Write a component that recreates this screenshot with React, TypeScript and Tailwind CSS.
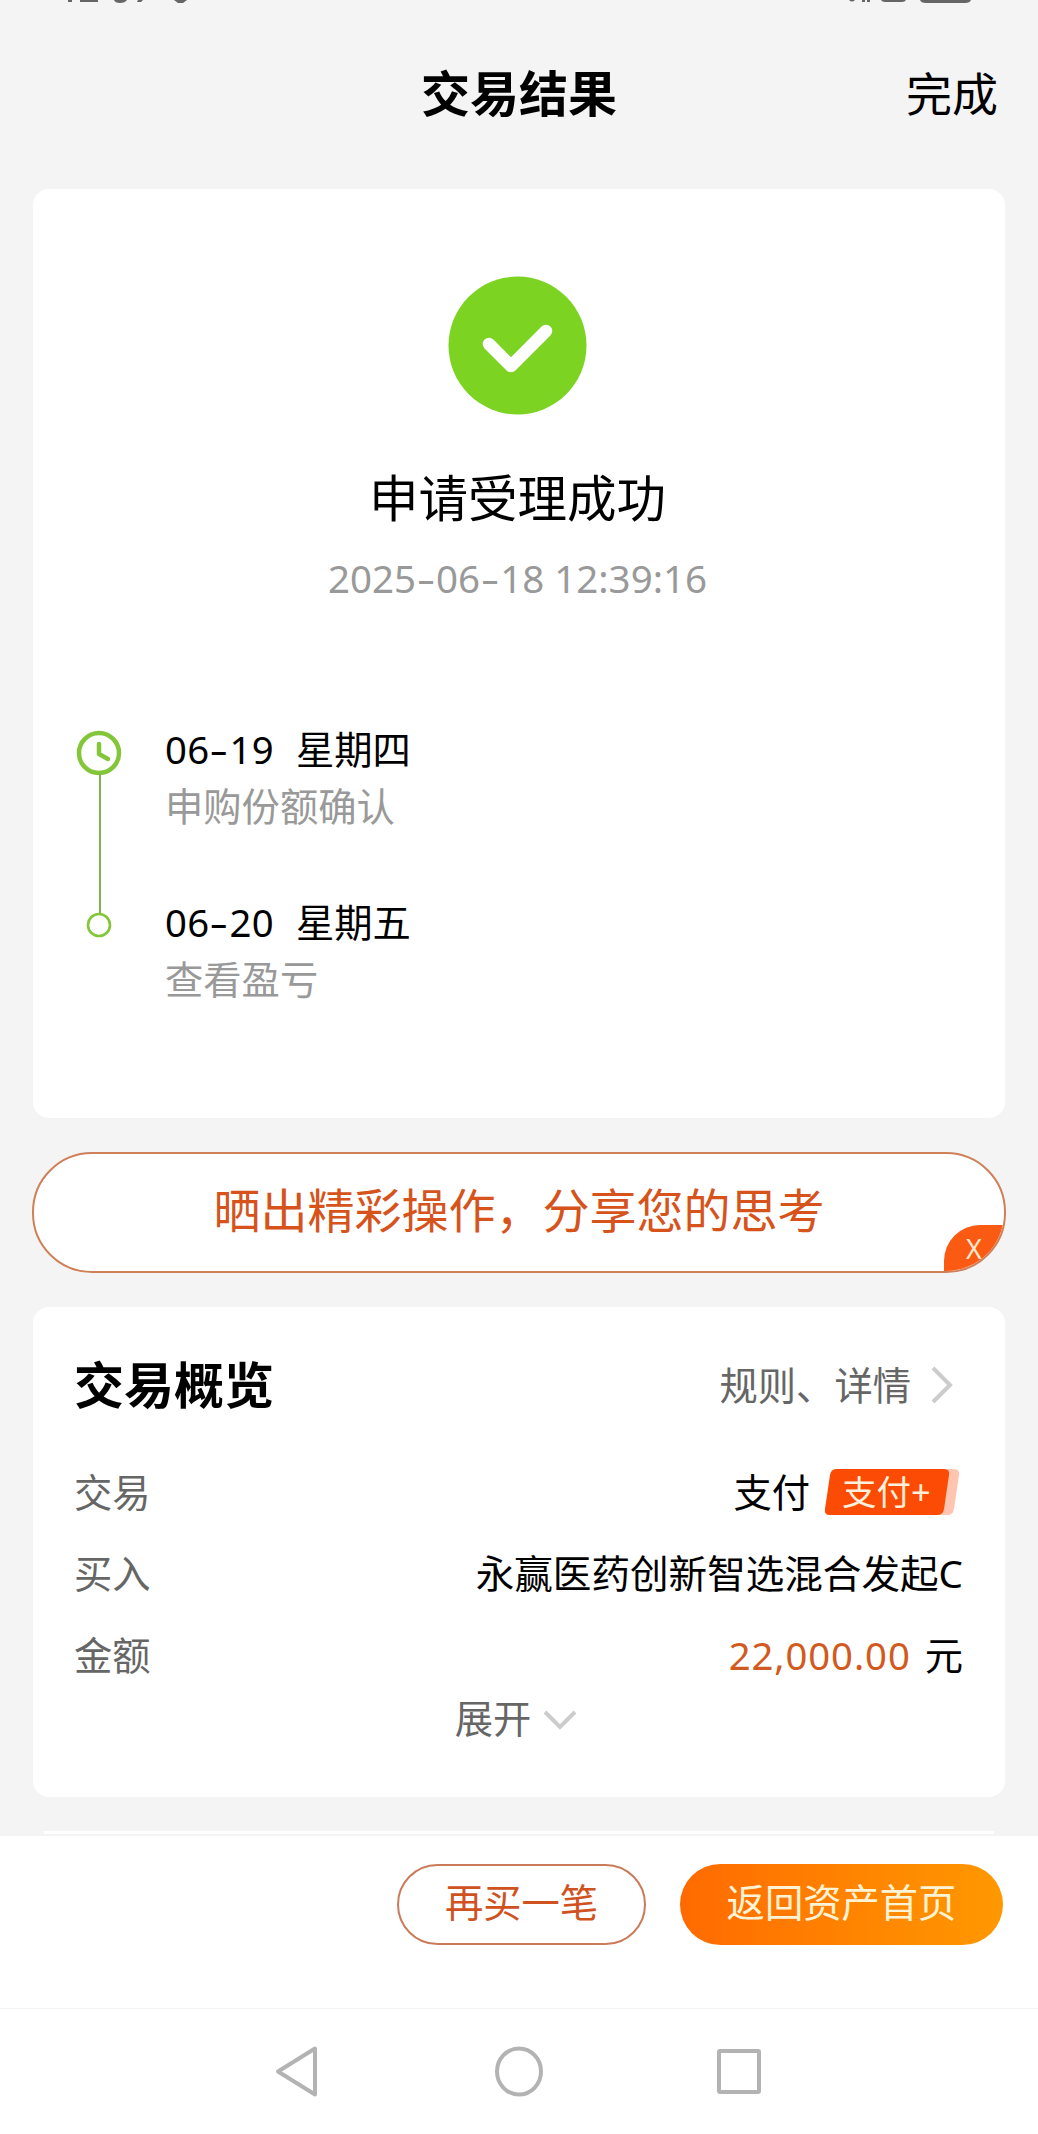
import type { ReactNode } from 'react';

type TimelineStep = {
  date: string;
  weekday: string;
  note: string;
};

const steps: TimelineStep[] = [
  { date: '06-19', weekday: '星期四', note: '申购份额确认' },
  { date: '06-20', weekday: '星期五', note: '查看盈亏' },
];

// 数字里的连字符比默认字形更宽
function Digits({ text }: { text: string }) {
  return (
    <>
      {text.split('').map((char, index) =>
        char === '-' ? (
          <span key={index} className="inline-block w-[20px] scale-x-150 text-center">
            -
          </span>
        ) : (
          <span key={index}>{char}</span>
        ),
      )}
    </>
  );
}

function StatusBar() {
  return (
    <svg className="block h-[6px] w-full" viewBox="0 0 1038 6" fill="#666">
      <path d="M68 0h4v2h-4ZM80 0h18v2h-18ZM114 0h13q-2 3-7 3t-6-3ZM138 0h5l-2 2h-4ZM174 0h13l-4 3h-5Z" />
      <path d="M849 0h6q-3 3-6 0ZM862 0h3v2h-3ZM867 0h3v2h-3ZM881 0h25q-1 2-4 2h-17q-3 0-4-2ZM920 0h51q-1 3-6 3h-39q-5 0-6-3Z" />
    </svg>
  );
}

function Row({ label, children }: { label: string; children: ReactNode }) {
  return (
    <div className="flex h-[81.5px] items-center justify-between">
      <span className="text-[#666]">{label}</span>
      <span className="flex items-center">{children}</span>
    </div>
  );
}

export default function App() {
  return (
    <div className="flex h-[2134px] w-[1038px] flex-col overflow-hidden bg-[#f4f4f4] font-['Noto_Sans','Noto_Sans_CJK_SC',sans-serif] text-[38.3px] leading-none text-black">
      <StatusBar />

      <header className="grid h-[183px] grid-cols-3 items-center pb-[9px]">
        <h1 className="col-start-2 text-center text-[49px] font-bold">交易结果</h1>
        <button type="button" className="mr-[40px] justify-self-end text-[46px]">
          完成
        </button>
      </header>

      <section className="mx-[33px] flex h-[929px] shrink-0 flex-col rounded-[16px] bg-white">
        <div className="flex flex-col items-center pt-[87px] pr-[3px]">
          <svg className="h-[139px] w-[139px]" viewBox="0 0 139 139" fill="none">
            <circle cx="69.5" cy="69.5" r="69" fill="#7dd321" />
            <path d="m41 68 22 22 35-35" stroke="#fff" strokeWidth="12.500" strokeLinecap="round" strokeLinejoin="round" />
          </svg>
          <p className="mt-[59px] text-[49.5px]">申请受理成功</p>
          <p className="mt-[35px] text-[38.5px] whitespace-nowrap text-[#999]">
            <Digits text="2025-06-18 12:39:16" />
          </p>
        </div>

        <div className="mt-[133px] flex pl-[43px]">
          <svg className="h-[210px] w-[46px] shrink-0" viewBox="0 0 46 210" fill="none" stroke="#83c63a">
            <circle cx="23" cy="23" r="20" strokeWidth="4.5" />
            <path d="M23 14v10l9 5" strokeWidth="4.500" strokeLinecap="round" strokeLinejoin="round" />
            <path d="M24 44v140" stroke="#7db54a" strokeWidth="2" />
            <circle cx="23" cy="195" r="11" strokeWidth="2.6" />
          </svg>
          <ol className="ml-[43px]">
            {steps.map((step) => (
              <li key={step.date} className="h-[173px]">
                <p className="flex">
                  <span className="w-[131px] tracking-[0.3px]">
                    <Digits text={step.date} />
                  </span>
                  {step.weekday}
                </p>
                <p className="mt-[19px] text-[#999]">{step.note}</p>
              </li>
            ))}
          </ol>
        </div>
      </section>

      <div className="relative mx-[32px] mt-[34px] flex h-[121px] shrink-0 items-center justify-center overflow-hidden rounded-[60px] border-2 border-[#cf8059] bg-white pb-[4px] text-[47px] text-[#d6531c]">
        晒出精彩操作，分享您的思考
        <button
          type="button"
          className="absolute right-0 bottom-0 flex h-[46px] w-[60px] items-center justify-center rounded-tl-[36px] bg-[#fa5a12] text-[27px] text-[#ffe9d0]"
        >
          X
        </button>
      </div>

      <section className="mx-[33px] mt-[34px] h-[490px] shrink-0 rounded-[16px] bg-white pr-[42px] pl-[41px]">
        <div className="flex h-[144px] items-center justify-between pt-[12px]">
          <h2 className="text-[50px] font-bold">交易概览</h2>
          <button type="button" className="flex items-center gap-[20px] pr-[10px] text-[#666]">
            规则、详情
            <svg className="h-[38px] w-[22px]" viewBox="0 0 22 38" fill="none" stroke="#ccc" strokeWidth="4">
              <path d="m2 2 17 17L2 36" />
            </svg>
          </button>
        </div>
        <Row label="交易">
          <span>支付</span>
          <span className="relative mr-[3px] ml-[14px] flex h-[46px] w-[136px] items-center pl-[18px] text-[34.5px] text-[#fff0dc]">
            <svg className="absolute inset-0 h-full w-full" viewBox="0 0 136 46">
              <path d="M24 0h106q6 0 5 6l-5 34q-1 6-7 6H17Z" fill="#ffc5b0" />
              <path d="M12 0h108q6 0 5 6l-5 34q-1 6-7 6H6q-6 0-5-6L6 6q1-6 6-6Z" fill="#fb4b04" />
            </svg>
            <span className="relative">支付+</span>
          </span>
        </Row>
        <Row label="买入">
          <span className="text-[38.6px]">永赢医药创新智选混合发起C</span>
        </Row>
        <Row label="金额">
          <span className="mr-[14px] tracking-[0.9px] text-[#d15a20]">22,000.00</span>元
        </Row>
        <button type="button" className="mx-auto flex h-[46px] items-center gap-[12px] pr-[5px] text-[#666]">
          展开
          <svg className="mt-[3px] h-[20px] w-[34px]" viewBox="0 0 34 20" fill="none" stroke="#ccc" strokeWidth="4">
            <path d="m2 2 15 15L32 2" />
          </svg>
        </button>
      </section>

      <div className="mx-[44px] mt-[34px] h-[3px] shrink-0 bg-white" />

      <footer className="mt-[2px] flex-1 bg-white">
        <div className="flex h-[173px] items-start justify-end gap-[34px] border-b border-[#f3f3f3] pt-[28px] pr-[35px]">
          <button
            type="button"
            className="h-[81px] w-[249px] rounded-full border-2 border-[#cb7b59] pb-[5px] text-[#d0521f]"
          >
            再买一笔
          </button>
          <button
            type="button"
            className="h-[81px] w-[323px] rounded-full bg-linear-to-r from-[#ff6a00] to-[#ff9800] pb-[5px] text-[#fff3d6]"
          >
            返回资产首页
          </button>
        </div>
        <nav>
          <svg className="h-[125px] w-full" viewBox="0 0 1038 125" fill="none" stroke="#b3b3b3" strokeWidth="4" strokeLinejoin="round">
            <path d="m278 62.500 37-23v46Z" />
            <ellipse cx="519" cy="62.500" rx="22" ry="23" />
            <rect x="719" y="42" width="40" height="41" rx="1" />
          </svg>
        </nav>
      </footer>
    </div>
  );
}
